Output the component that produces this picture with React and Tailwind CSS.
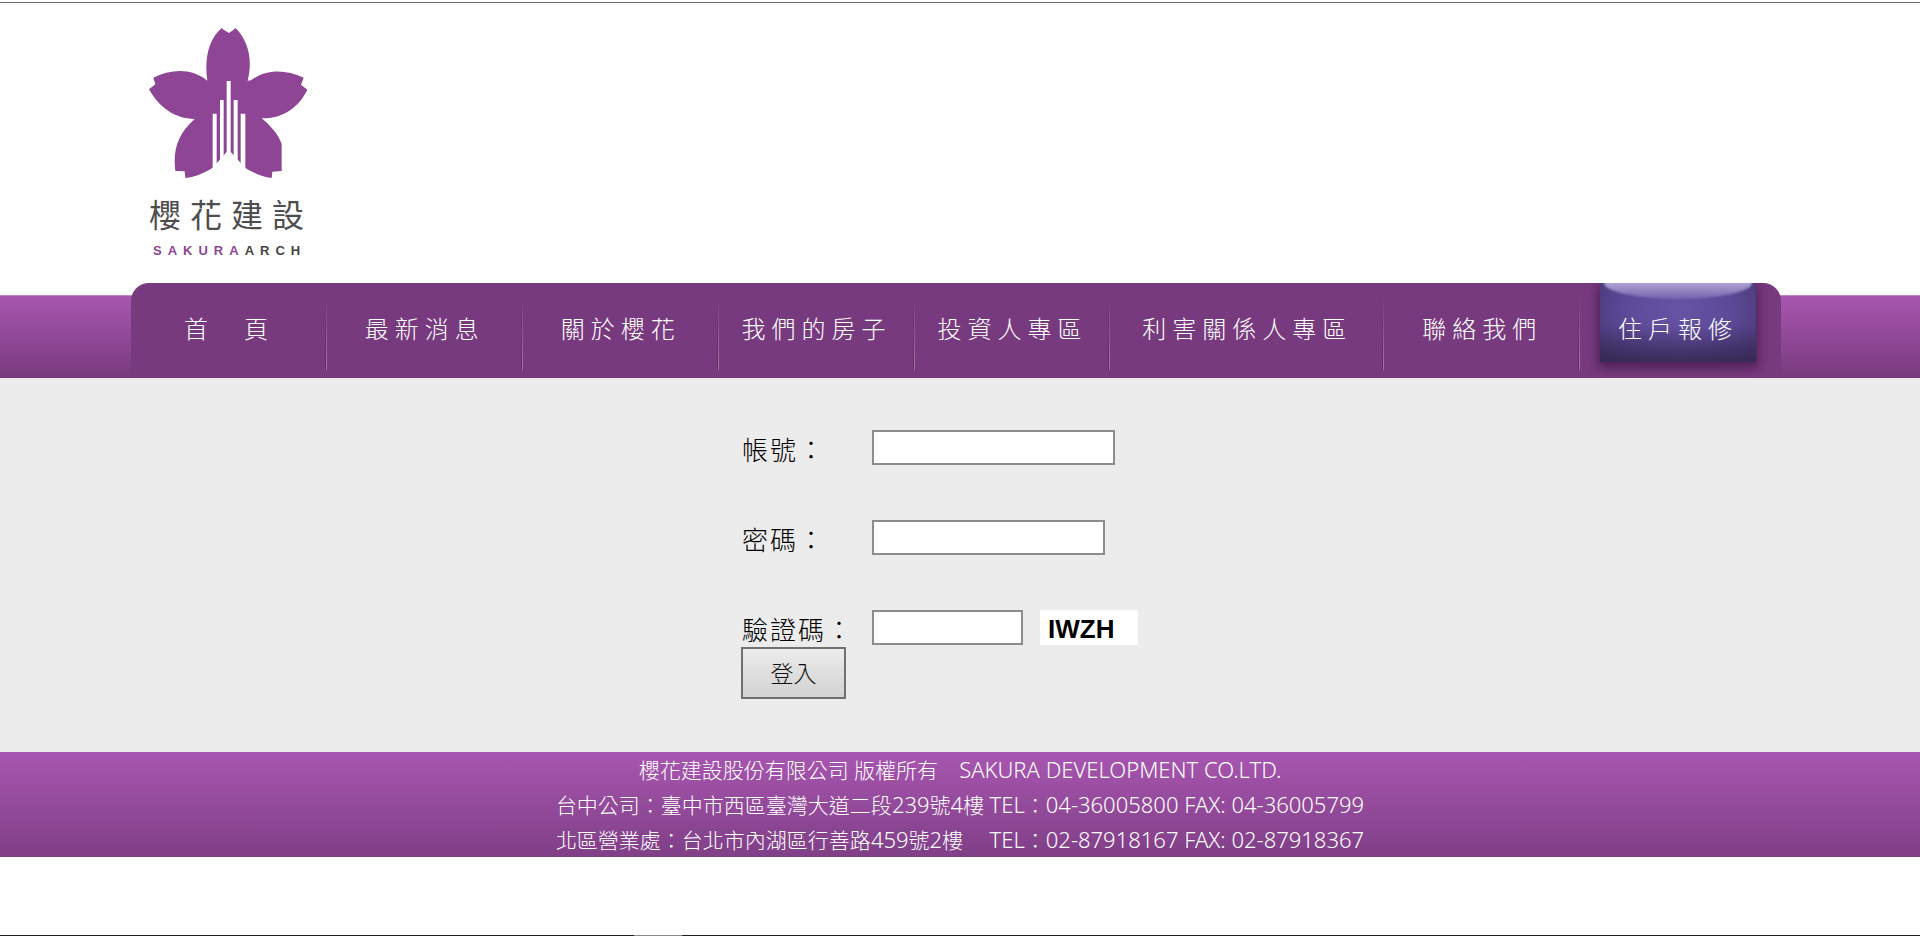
const NAV_ITEMS = [
  { label: "首　頁" },
  { label: "最新消息" },
  { label: "關於櫻花" },
  { label: "我們的房子" },
  { label: "投資人專區" },
  { label: "利害關係人專區", wide: true },
  { label: "聯絡我們" },
  { label: "住戶報修", active: true },
];

function Flower() {
  return (
    <svg viewBox="0 0 480 456" className="block h-[152px] w-40" aria-hidden="true">
      <g transform="translate(-57 -80)">
        <path
          fill="#8e4596"
          d="M232 241 C223 180 234 118 275 83 C282 91 290 93 297 98 C304 93 310 90 317 83 C352 120 370 172 353 241 L363 240 C405 207 464 205 521 232 L513 253 L532 268 C506 322 458 355 395 354 C424 379 444 401 455 431 L455 512 L427 514 L425 533 C394 528 369 517 346 503 L296 448 L248 502 C222 518 197 529 166 533 L164 513 L136 512 C128 448 144 400 194 356 C134 355 88 322 57 267 L76 252 L70 232 C126 204 186 204 232 241 Z"
        />
        <path
          fill="#fff"
          d="M290 242h12v225h-12zM270 299h11v195h-11zM311 299h12v195h-12zM248 340h12v166h-12zM332 340h14v166h-14z"
        />
      </g>
    </svg>
  );
}

function Logo() {
  return (
    <a href="#home" className="flex flex-col text-[#4d4d4d]">
      <Flower />
      <span className="mt-3.5 text-[32px] leading-[44px] tracking-[9px]">櫻花建設</span>
      <span className="mt-1.5 pl-1 font-['Liberation_Sans',sans-serif] text-[13px] leading-4 font-bold tracking-[6px] text-[#444]">
        <span className="text-[#8e4596]">SAKURA</span>ARCH
      </span>
    </a>
  );
}

function NavItem({ label, wide, active }) {
  return (
    <li className={`relative flex items-stretch justify-center ${wide ? "flex-[274]" : "flex-[196]"}`}>
      {active ? (
        <span className="absolute top-0 left-5 h-[79px] w-[156px] overflow-hidden bg-[radial-gradient(ellipse_at_50%_35%,#6854a6_0%,#5c4997_50%,#4a3a78_85%,#3d2f62_100%)] shadow-[0_4px_10px_2px_rgba(50,15,60,0.6)]">
          <span className="absolute -top-4 left-1 h-8 w-[148px] rounded-[50%] bg-linear-to-b from-[#b0a2d2] from-50% to-[#7562ae] blur-[1px]" />
          <span className="absolute bottom-0 left-0 h-9 w-full bg-linear-to-b from-transparent to-[#33274f]/80" />
        </span>
      ) : (
        <span className="absolute top-3 right-0 h-[75px] w-[2px] border-r border-[#a67aab] bg-[#5d2b62] [mask-image:linear-gradient(to_bottom,transparent,black)]" />
      )}
      <a
        href="#section"
        className="relative flex items-center pb-1 text-2xl font-light tracking-[6px] whitespace-nowrap text-white"
      >
        {label}
      </a>
    </li>
  );
}

function Field({ id, label, type, width, children }) {
  return (
    <div className="flex h-9 items-start">
      <label
        htmlFor={id}
        className="w-[131px] pl-px text-[26px] leading-10 font-light tracking-[2px] whitespace-nowrap text-black"
      >
        {label}
      </label>
      <input id={id} type={type} className={`h-[35px] border-2 border-[#8c8c8c] bg-white px-1 text-xl outline-none ${width}`} />
      {children}
    </div>
  );
}

function Latin({ children }) {
  return <span className="text-[22px]">{children}</span>;
}

export default function App() {
  return (
    <div
      className="flex min-h-screen flex-col bg-white font-['Noto_Sans','Noto_Sans_CJK_TC',sans-serif]"
      lang="zh-Hant"
    >
      <div className="mt-0.5 h-px bg-[#6f6f6f]" />
      <header>
        <div className="mx-auto flex h-[280px] w-full max-w-[1658px] pt-6 pr-2 pl-[18px]">
          <Logo />
        </div>
        <div className="bg-[linear-gradient(to_bottom,transparent_12px,#d9b3dd_12px,#a856b0_13px,#783a7e_95px)]">
          <div className="mx-auto max-w-[1658px] pr-2">
            <nav className="h-[95px] overflow-hidden rounded-t-[18px] bg-[#783a7e] pr-[5px]">
              <ul className="flex h-full">
                {NAV_ITEMS.map((item) => (
                  <NavItem key={item.label} {...item} />
                ))}
              </ul>
            </nav>
          </div>
        </div>
      </header>

      <main className="bg-[#ececec] pt-[52px] pb-[53px]">
        <form className="mx-auto w-full max-w-[438px]" onSubmit={(e) => e.preventDefault()}>
          <div className="flex flex-col gap-[54px]">
            <Field id="account" label="帳號：" type="text" width="w-[243px]" />
            <Field id="password" label="密碼：" type="password" width="w-[233px]" />
            <Field id="captcha" label="驗證碼：" type="text" width="w-[151px]">
              <span className="ml-[17px] flex h-[35px] w-[98px] items-center bg-white pt-1 pl-2 font-['Liberation_Sans',sans-serif] text-[26px] font-bold text-black">
                IWZH
              </span>
            </Field>
          </div>
          <button
            type="submit"
            className="mt-px block h-[52px] w-[105px] border-2 border-[#707070] bg-linear-to-b from-[#ececec] to-[#d2d2d2] text-[23px] font-light text-[#111]"
          >
            登入
          </button>
        </form>
      </main>

      <footer className="bg-linear-to-b from-[#a856b0] to-[#803f87] text-center text-[21px] leading-[35px] font-light whitespace-pre text-white">
        <p className="h-[35px]">
          櫻花建設股份有限公司 版權所有　<Latin>SAKURA DEVELOPMENT CO.LTD.</Latin>
        </p>
        <p className="h-[35px]">
          台中公司：臺中市西區臺灣大道二段<Latin>239</Latin>號<Latin>4</Latin>樓 <Latin>TEL</Latin>：
          <Latin>04-36005800 FAX: 04-36005799</Latin>
        </p>
        <p className="h-[35px]">
          北區營業處：台北市內湖區行善路<Latin>459</Latin>號<Latin>2</Latin>樓　 <Latin>TEL</Latin>：
          <Latin>02-87918167 FAX: 02-87918367</Latin>
        </p>
      </footer>

      <div className="mt-auto flex h-px bg-[#1f1f1f]">
        <span className="ml-[33%] w-12 bg-[#8a8a8a]" />
      </div>
    </div>
  );
}
